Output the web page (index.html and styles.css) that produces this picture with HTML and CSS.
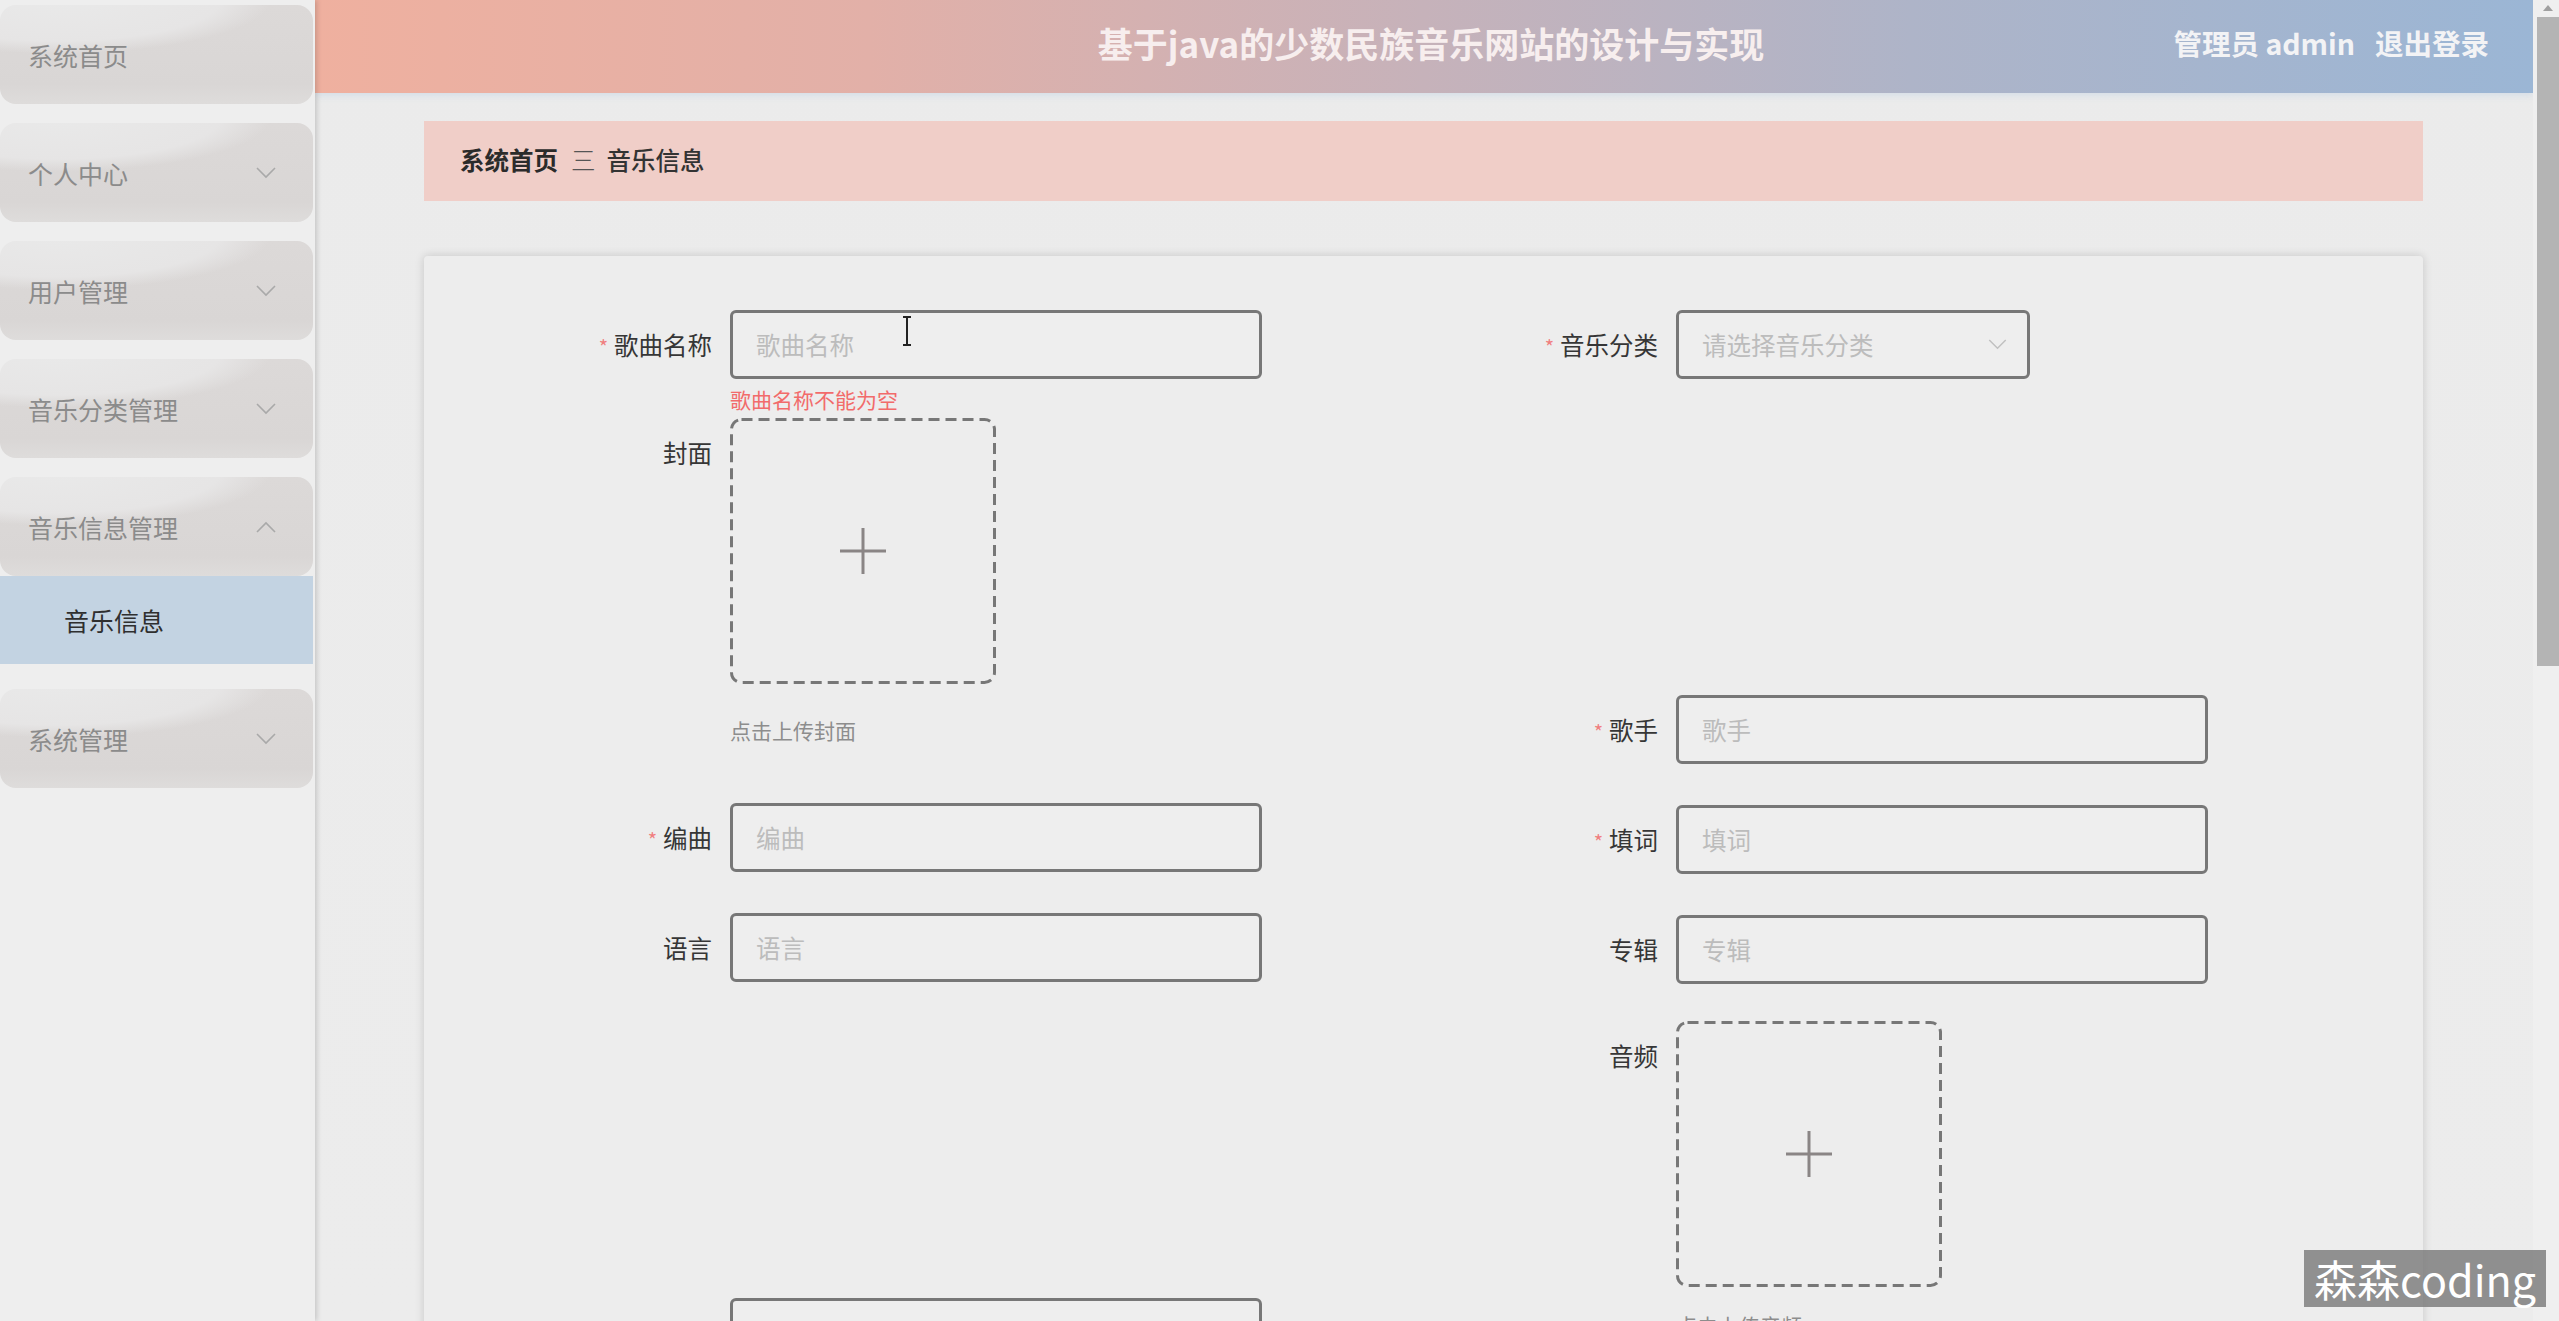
FILE: index.html
```html
<!DOCTYPE html>
<html lang="zh-CN">
<head>
<meta charset="utf-8">
<title>音乐信息</title>
<link rel="stylesheet" href="styles.css">
</head>
<body>
<div class="app">
  <aside class="sidebar">
    <div class="menu-item"><span>系统首页</span></div>
    <div class="menu-item"><span>个人中心</span><svg class="chev" viewBox="0 0 20 12"><polyline points="1,1 10,10 19,1"/></svg></div>
    <div class="menu-item"><span>用户管理</span><svg class="chev" viewBox="0 0 20 12"><polyline points="1,1 10,10 19,1"/></svg></div>
    <div class="menu-item"><span>音乐分类管理</span><svg class="chev" viewBox="0 0 20 12"><polyline points="1,1 10,10 19,1"/></svg></div>
    <div class="menu-item open"><span>音乐信息管理</span><svg class="chev" viewBox="0 0 20 12"><polyline points="1,11 10,2 19,11"/></svg></div>
    <div class="sub-item">音乐信息</div>
    <div class="menu-item"><span>系统管理</span><svg class="chev" viewBox="0 0 20 12"><polyline points="1,1 10,10 19,1"/></svg></div>
  </aside>

  <div class="main">
    <header class="topbar">
      <div class="title">基于java的少数民族音乐网站的设计与实现</div>
      <div class="user"><span>管理员 admin</span><span>退出登录</span></div>
    </header>

    <div class="content">
      <div class="breadcrumb">
        <span class="bc-home">系统首页</span>
        <span class="bc-sep">三</span>
        <span class="bc-current">音乐信息</span>
      </div>

      <div class="card">
        <div class="form-col">
          <div class="form-item tight">
            <label class="label"><span class="req">*</span>歌曲名称</label>
            <div class="input">歌曲名称</div>
          </div>
          <div class="error">歌曲名称不能为空</div>
          <div class="form-item after-cover">
            <label class="label">封面</label>
            <div class="uploader">
              <svg class="upload" viewBox="0 0 266 266"><rect class="dash" x="1.5" y="1.5" width="263" height="263" rx="10"/><path class="plus" d="M133 110 V156 M110 133 H156"/></svg>
              <div class="tip">点击上传封面</div>
            </div>
          </div>
          <div class="form-item">
            <label class="label"><span class="req">*</span>编曲</label>
            <div class="input">编曲</div>
          </div>
          <div class="form-item before-duration">
            <label class="label">语言</label>
            <div class="input">语言</div>
          </div>
          <div class="form-item">
            <label class="label">时长</label>
            <div class="input">时长</div>
          </div>
        </div>

        <div class="form-col">
          <div class="form-item before-singer">
            <label class="label"><span class="req">*</span>音乐分类</label>
            <div class="input select"><span>请选择音乐分类</span><svg class="sel-arrow" viewBox="0 0 20 12"><polyline points="1,1 10,10 19,1"/></svg></div>
          </div>
          <div class="form-item">
            <label class="label"><span class="req">*</span>歌手</label>
            <div class="input">歌手</div>
          </div>
          <div class="form-item">
            <label class="label"><span class="req">*</span>填词</label>
            <div class="input">填词</div>
          </div>
          <div class="form-item before-audio">
            <label class="label">专辑</label>
            <div class="input">专辑</div>
          </div>
          <div class="form-item">
            <label class="label">音频</label>
            <div class="uploader">
              <svg class="upload" viewBox="0 0 266 266"><rect class="dash" x="1.5" y="1.5" width="263" height="263" rx="10"/><path class="plus" d="M133 110 V156 M110 133 H156"/></svg>
              <div class="tip tip-audio">点击上传音频</div>
            </div>
          </div>
        </div>
      </div>
    </div>
  </div>

  <div class="scrollbar">
    <svg class="scroll-arrow" viewBox="0 0 22 17"><polygon points="11,5 16,11 6,11"/></svg>
    <div class="thumb"></div>
  </div>

  <svg class="cursor" viewBox="0 0 12 30"><path d="M2 1 H10 M6 1 V29 M2 29 H10"/></svg>
  <div class="watermark">森森coding</div>
</div>
</body>
</html>
```

FILE: styles.css
```css
html, body {
  margin: 0;
  padding: 0;
  width: 2559px;
  height: 1321px;
  overflow: hidden;
  background: #ebebeb;
  font-family: "Noto Sans CJK SC", "Noto Sans", sans-serif;
}

.app {
  position: relative;
  display: flex;
  width: 2559px;
  height: 1321px;
}

/* ---------- sidebar ---------- */
.sidebar {
  width: 315px;
  flex: none;
  box-sizing: border-box;
  padding-top: 5px;
  background: #eeeeee;
  display: flex;
  flex-direction: column;
  box-shadow: 2px 0 5px rgba(0, 0, 0, 0.16);
  z-index: 2;
}

.menu-item {
  width: 313px;
  height: 99px;
  flex: none;
  margin-bottom: 19px;
  box-sizing: border-box;
  padding: 0 37px 0 28px;
  border-radius: 16px;
  display: flex;
  align-items: center;
  justify-content: space-between;
  font-size: 25px;
  color: #8b8b8b;
  background:
    radial-gradient(ellipse 95% 75% at 18% -5%, #e9e9e9 0%, #e6e5e5 55%, rgba(220,217,216,0) 72%),
    linear-gradient(180deg, #dcd9d8 0%, #d9d6d5 80%, #dedcdb 100%);
}

.menu-item.open {
  margin-bottom: 0;
}

.chev {
  width: 20px;
  height: 12px;
  fill: none;
  stroke: #a9a9a9;
  stroke-width: 1.6;
}

.sub-item {
  width: 313px;
  height: 88px;
  flex: none;
  margin-bottom: 25px;
  box-sizing: border-box;
  padding-left: 64px;
  display: flex;
  align-items: center;
  font-size: 25px;
  color: #2f2f2f;
  background: #c3d3e2;
}

/* ---------- main ---------- */
.main {
  flex: 1;
  min-width: 0;
  display: flex;
  flex-direction: column;
  background: linear-gradient(180deg, #ebebeb 0%, #ececec 100%);
}

.topbar {
  height: 93px;
  flex: none;
  box-sizing: border-box;
  padding-bottom: 9px;
  display: grid;
  grid-template-columns: 1fr auto 1fr;
  align-items: center;
  background: linear-gradient(90deg, #efb09f 0%, #e2b0a8 25%, #c6b2ba 50%, #aeb4c8 72%, #9bb6d5 100%);
  box-shadow: 0 3px 6px rgba(170, 195, 225, 0.3);
}

.title {
  grid-column: 2;
  padding-left: 14px;
  font-size: 35px;
  font-weight: 700;
  color: #f7eeee;
  white-space: nowrap;
}

.user {
  grid-column: 3;
  justify-self: end;
  padding-right: 44px;
  display: flex;
  gap: 20px;
  font-size: 28.5px;
  font-weight: 700;
  color: #f3f3f5;
  white-space: nowrap;
}

.content {
  padding: 28px 110px 0 109px;
}

.breadcrumb {
  height: 80px;
  box-sizing: border-box;
  padding-left: 36px;
  padding-bottom: 4px;
  display: flex;
  align-items: center;
  background: #f0cec8;
  font-size: 24.5px;
  color: #333333;
}

.bc-home {
  font-weight: 700;
  color: #2b2b2b;
}

.bc-sep {
  margin: 0 11px 0 13px;
  color: #555555;
  font-weight: 300;
}

.bc-current {
  color: #333333;
  font-weight: 500;
}

.card {
  margin-top: 55px;
  height: 1200px;
  box-sizing: border-box;
  padding: 54px 0 0 30px;
  display: flex;
  background: #ededed;
  border-radius: 4px;
  box-shadow: 0 0 10px rgba(0, 0, 0, 0.16);
}

.form-col {
  width: 946px;
  flex: none;
  display: flex;
  flex-direction: column;
}

.form-item {
  display: flex;
  align-items: flex-start;
  margin-bottom: 39px;
}

.form-item.tight { margin-bottom: 0; }
.form-item.after-cover { margin-bottom: 53px; }
.form-item.before-duration { margin-bottom: 316px; }
.form-item.before-singer { margin-bottom: 314px; }
.form-item.before-audio { margin-bottom: 37px; }

.label {
  width: 276px;
  flex: none;
  box-sizing: border-box;
  padding-right: 18px;
  text-align: right;
  line-height: 69px;
  font-size: 24.5px;
  color: #363636;
}

.req {
  color: #f07f7f;
  margin-right: 6px;
  font-size: 20px;
}

.input {
  width: 532px;
  height: 69px;
  box-sizing: border-box;
  padding-left: 23px;
  display: flex;
  align-items: center;
  border: 3px solid #777777;
  border-radius: 6px;
  background: #eeeeee;
  font-size: 24.5px;
  color: #bcbcbc;
}

.input.select {
  width: 354px;
  padding-right: 20px;
  justify-content: space-between;
}

.sel-arrow {
  width: 19px;
  height: 11px;
  fill: none;
  stroke: #c0c0c0;
  stroke-width: 1.6;
}

.error {
  height: 37px;
  margin-left: 276px;
  line-height: 37px;
  font-size: 21px;
  color: #f26b6b;
}

.uploader {
  display: flex;
  flex-direction: column;
}

.upload {
  display: block;
  width: 266px;
  height: 266px;
}

.upload .dash {
  fill: none;
  stroke: #777777;
  stroke-width: 3;
  stroke-dasharray: 11 6;
}

.upload .plus {
  fill: none;
  stroke: #8a8585;
  stroke-width: 3;
}

.tip {
  padding-top: 26px;
  line-height: 40px;
  font-size: 21px;
  color: #8d8d8d;
}

.tip.tip-audio {
  padding-top: 18px;
}

/* ---------- scrollbar ---------- */
.scrollbar {
  width: 26px;
  flex: none;
  display: flex;
  flex-direction: column;
  align-items: flex-end;
  background: #efefef;
}

.scroll-arrow {
  width: 22px;
  height: 17px;
  fill: #a0a0a0;
}

.thumb {
  width: 22px;
  height: 649px;
  background: #b4b4b4;
}

/* ---------- overlays ---------- */
.cursor {
  position: absolute;
  left: 901px;
  top: 316px;
  width: 12px;
  height: 30px;
  fill: none;
  stroke: #222222;
  stroke-width: 2;
}

.watermark {
  position: absolute;
  right: 13px;
  bottom: 14px;
  height: 57px;
  padding: 0 10px;
  line-height: 57px;
  background: rgba(120, 120, 120, 0.8);
  color: #ffffff;
  font-size: 43px;
  white-space: nowrap;
}
```
